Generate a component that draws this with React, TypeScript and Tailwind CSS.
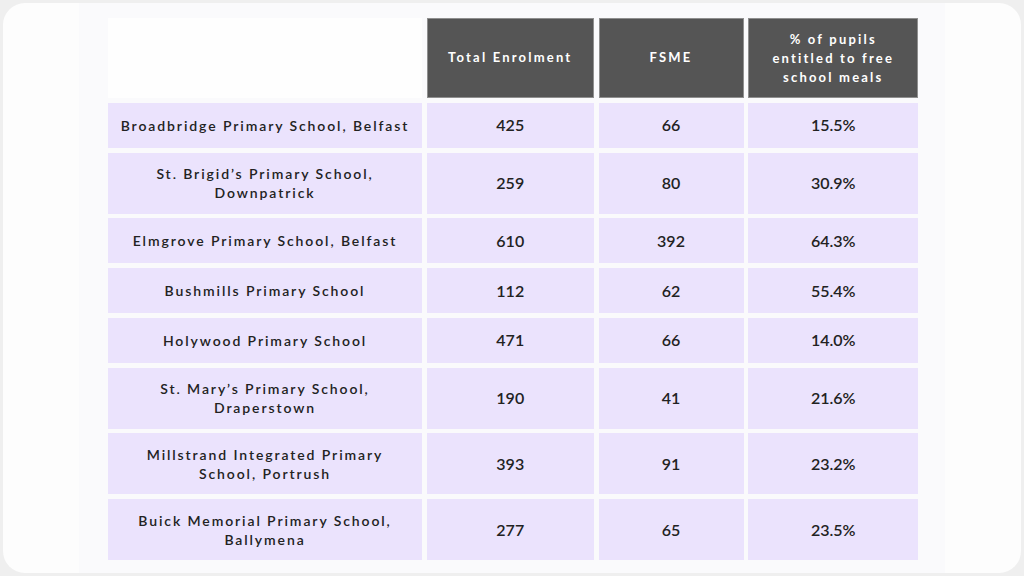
import React from 'react';

interface SchoolRow {
  name: string[];
  enrolment: string;
  fsme: string;
  percent: string;
}

const rows: SchoolRow[] = [
  { name: ['Broadbridge Primary School, Belfast'], enrolment: '425', fsme: '66', percent: '15.5%' },
  { name: ['St. Brigid’s Primary School,', 'Downpatrick'], enrolment: '259', fsme: '80', percent: '30.9%' },
  { name: ['Elmgrove Primary School, Belfast'], enrolment: '610', fsme: '392', percent: '64.3%' },
  { name: ['Bushmills Primary School'], enrolment: '112', fsme: '62', percent: '55.4%' },
  { name: ['Holywood Primary School'], enrolment: '471', fsme: '66', percent: '14.0%' },
  { name: ['St. Mary’s Primary School,', 'Draperstown'], enrolment: '190', fsme: '41', percent: '21.6%' },
  { name: ['Millstrand Integrated Primary', 'School, Portrush'], enrolment: '393', fsme: '91', percent: '23.2%' },
  { name: ['Buick Memorial Primary School,', 'Ballymena'], enrolment: '277', fsme: '65', percent: '23.5%' },
];

const cell = 'bg-[#ebe3fd] flex items-center justify-center text-center text-[#222222]';
const numCell = cell + " font-['Lato',sans-serif] font-semibold text-[16px]";

const App: React.FC = () => {
  return (
    <div className="w-[1024px] h-[576px] bg-[#efefef] p-[3px]">
      <div className="h-full rounded-[22px] bg-[#fdfdfd] flex justify-center overflow-hidden">
        <div className="w-[866px] h-full bg-[#fafafc] pl-[29px] pt-[15px]">
          <div className="grid grid-cols-[314px_167px_145px_170px] gap-[4.75px]">
            {/* Header */}
            <div className="h-[80px] bg-[#fefefe]" />
            {['Total Enrolment', 'FSME'].map((h) => (
              <div
                key={h}
                className="h-[80px] bg-[#555555] border border-[#8f8f8f] flex items-center justify-center text-white font-['Lato',sans-serif] font-bold text-[13px] tracking-[2.2px]"
              >
                {h}
              </div>
            ))}
            <div className="h-[80px] bg-[#555555] border border-[#8f8f8f] flex flex-col items-center justify-center text-white font-['Lato',sans-serif] font-bold text-[13px] tracking-[2.2px] leading-[19px] text-center">
              <span>% of pupils</span>
              <span>entitled to free</span>
              <span>school meals</span>
            </div>

            {/* Body */}
            {rows.map((r) => {
              const h = r.name.length > 1 ? 'h-[61px]' : 'h-[45px]';
              return (
                <React.Fragment key={r.name.join(' ')}>
                  <div className={`${cell} ${h} flex-col font-['Lato',sans-serif] font-semibold text-[14px] tracking-[1.9px] leading-[19px]`}>
                    {r.name.map((line) => (
                      <span key={line}>{line}</span>
                    ))}
                  </div>
                  <div className={`${numCell} ${h}`}>{r.enrolment}</div>
                  <div className={`${numCell} ${h}`}>{r.fsme}</div>
                  <div className={`${numCell} ${h}`}>{r.percent}</div>
                </React.Fragment>
              );
            })}
          </div>
        </div>
      </div>
    </div>
  );
};

export default App;
